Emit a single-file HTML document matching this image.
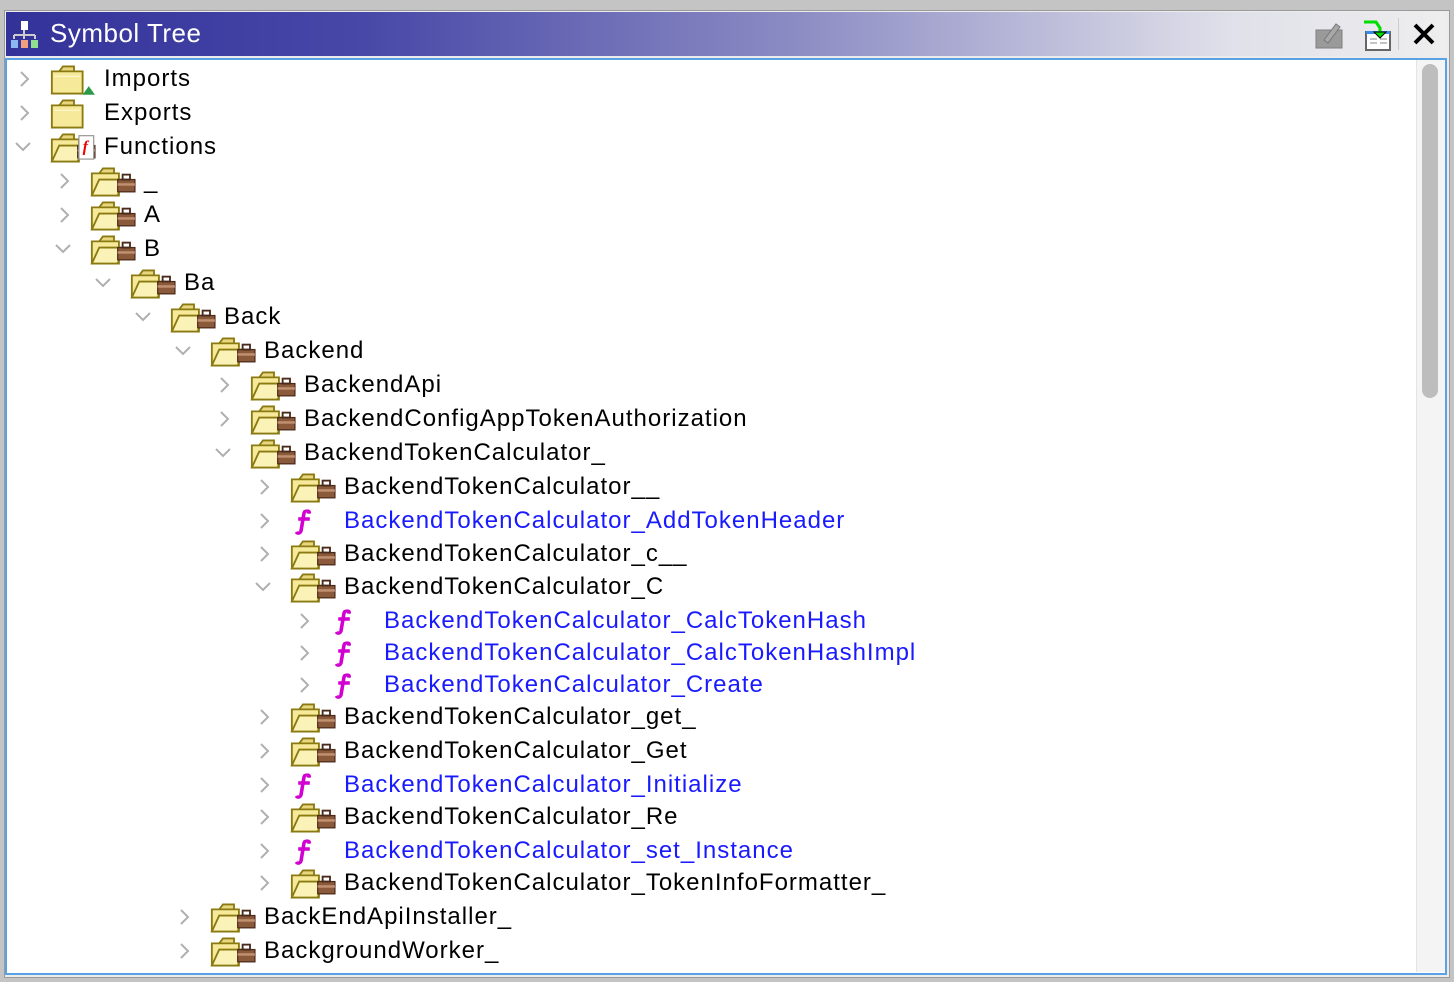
<!DOCTYPE html>
<html><head><meta charset="utf-8"><style>
body{margin:0;width:1454px;height:982px;overflow:hidden;background:#c4c4c4;font-family:"Liberation Sans",sans-serif;position:relative}
#win{position:absolute;left:4px;top:10px;width:1446px;height:968px;background:#ececec;border:1px solid #9a9a9a;box-sizing:border-box}
#title{position:absolute;left:6px;top:12px;width:1440px;height:44px;background:linear-gradient(90deg,#32329a 0%,#4848a8 25%,#8c8cc4 55%,#e0e0ea 85%,#eeeeee 100%)}
#title span{position:absolute;left:44px;top:6px;color:#fff;font-size:26px;letter-spacing:0.5px}
#content{position:absolute;left:5px;top:58px;width:1442px;height:917px;background:#fff;border:2px solid #5aa2e6;box-sizing:border-box}
.r{position:absolute;height:34px;font-size:24px;line-height:34px;white-space:nowrap}
.c{position:absolute;color:#b0b0b0}
.t{position:absolute;color:#000;letter-spacing:1px}
.b{color:#1a1aff}
#sb{position:absolute;left:1416px;top:60px;width:28px;height:912px;background:#f4f4f4;border-left:1px solid #e4e4e4}
#th{position:absolute;left:1422px;top:64px;width:16px;height:334px;background:#bdbdbd;border-radius:8px}
</style></head><body>
<div id="win"></div>
<div id="title">
<svg style="position:absolute;left:4px;top:8px" width="30" height="30" viewBox="0 0 30 30"><rect x="11" y="1" width="7" height="9" fill="#fff"/><path d="M14 10v5M4 15h21M4 15v4M14 15v4M25 15v4" stroke="#ccc" stroke-width="2" fill="none"/><rect x="1" y="20" width="7" height="8" fill="#8ab8f0"/><rect x="11" y="20" width="7" height="8" fill="#f0a080"/><rect x="21" y="20" width="7" height="8" fill="#90e090"/></svg>
<span>Symbol Tree</span>
<svg style="position:absolute;left:1308px;top:6px" width="32" height="32" viewBox="0 0 32 32"><rect x="2" y="12" width="26" height="18" fill="#9a9a9a" stroke="#808080"/><path d="M10 22l12-16 4 3-12 16z" fill="#a8a8a8" stroke="#777"/></svg>
<svg style="position:absolute;left:1356px;top:6px" width="32" height="34" viewBox="0 0 32 34"><rect x="4" y="14" width="24" height="18" fill="#fff" stroke="#666" stroke-width="2"/><rect x="4" y="13" width="24" height="3" fill="#3a8ae0"/><path d="M8 21h7M8 25h7M18 21h7M18 25h7" stroke="#888"/><path d="M2 4h12l4 6v8" stroke="#00dd00" stroke-width="3" fill="none"/><path d="M12 14l6 6 6-6z" fill="#00dd00" stroke="#000" stroke-width="1"/></svg>
<div style="position:absolute;left:1392px;top:6px;width:1px;height:32px;background:#ccc"></div>
<svg style="position:absolute;left:1406px;top:10px" width="24" height="24" viewBox="0 0 24 24"><path d="M3 3l18 18M21 3L3 21" stroke="#000" stroke-width="4"/></svg>
</div>
<div id="content"></div>
<div id="sb"><div id="th" style="left:5px;top:4px"></div></div>
<svg width="0" height="0" style="position:absolute">
<defs>
<g id="fo"><path d="M1 6h6l3-4h9v4" fill="#e8d680" stroke="#8a7a10" stroke-width="1.5"/><path d="M1 24V6h22v18z" fill="#f6ea9a" stroke="#8a7a10" stroke-width="1.5"/><path d="M1 24l6-13h20l-5 13z" fill="#fbf2b8" stroke="#8a7a10" stroke-width="1.5"/><rect x="22" y="11" width="14" height="10" fill="#8a5a3a" stroke="#4a2a1a"/><rect x="26" y="7" width="6" height="4" fill="none" stroke="#4a2a1a" stroke-width="1.5"/><rect x="22" y="14" width="14" height="2" fill="#c09070"/></g>
<g id="fc"><path d="M1 6h6l3-4h9v4" fill="#e8d680" stroke="#8a7a10" stroke-width="1.5"/><path d="M1 24V6h25v18z" fill="#f6ea9a" stroke="#8a7a10" stroke-width="1.5"/><path d="M3 10h21" stroke="#fff8d0"/></g>
<g id="ff"><path d="M10 2c4-2 7 0 6 2l-2 0c0-1-2-2-3 0l-3 18c-1 3-4 4-6 2l2-1c1 1 2 0 2-1l3-18zM5 9h10v2H5z" fill="#e000e0" stroke="#d000d0" stroke-width="1.6"/></g>
</defs></svg>
<div id="rows"></div>
<script>
var R=[[79,0,'ci','Imports'],[113,0,'c','Exports'],[147,0,'fn','Functions',1],
[181,1,'o','_'],[215,1,'o','A'],[249,1,'o','B',1],[283,2,'o','Ba',1],[317,3,'o','Back',1],[351,4,'o','Backend',1],
[385,5,'o','BackendApi'],[419,5,'o','BackendConfigAppTokenAuthorization'],[453,5,'o','BackendTokenCalculator_',1],
[487,6,'o','BackendTokenCalculator__'],[521,6,'f','BackendTokenCalculator_AddTokenHeader'],[554,6,'o','BackendTokenCalculator_c__'],[587,6,'o','BackendTokenCalculator_C',1],
[621,7,'f','BackendTokenCalculator_CalcTokenHash'],[653,7,'f','BackendTokenCalculator_CalcTokenHashImpl'],[685,7,'f','BackendTokenCalculator_Create'],
[717,6,'o','BackendTokenCalculator_get_'],[751,6,'o','BackendTokenCalculator_Get'],[785,6,'f','BackendTokenCalculator_Initialize'],[817,6,'o','BackendTokenCalculator_Re'],[851,6,'f','BackendTokenCalculator_set_Instance'],[883,6,'o','BackendTokenCalculator_TokenInfoFormatter_'],
[917,4,'o','BackEndApiInstaller_'],[951,4,'o','BackgroundWorker_']];
var h='';
R.forEach(function(r){var y=r[0]-17,L=r[1]*40,ex=r[4];
var ch=ex?'<svg class="c" style="left:'+(14+L)+'px;top:9px" width="18" height="16"><path d="M2 4l7 7 7-7" stroke="#b0b0b0" stroke-width="2" fill="none"/></svg>':'<svg class="c" style="left:'+(18+L)+'px;top:8px" width="14" height="18"><path d="M3 2l7 7-7 7" stroke="#b0b0b0" stroke-width="2" fill="none"/></svg>';
var ic='',cls='';
if(r[2]=='o')ic='<svg style="position:absolute;left:'+(50+L)+'px;top:2px" width="48" height="32" viewBox="0 0 38 26"><use href="#fo"/></svg>';
else if(r[2]=='f'){ic='<svg style="position:absolute;left:'+(294+L-240)+'px;top:5px" width="20" height="26"><use href="#ff"/></svg>';cls=' b';}
else if(r[2]=='c'||r[2]=='ci'){ic='<svg style="position:absolute;left:'+(50+L)+'px;top:2px" width="48" height="32" viewBox="0 0 38 26"><use href="#fc"/>'+(r[2]=='ci'?'<path d="M26 25l5-7 5 7z" fill="#2a9a4a"/>':'')+'</svg>';}
else ic='<svg style="position:absolute;left:'+(50+L)+'px;top:2px" width="48" height="32" viewBox="0 0 38 26"><use href="#fo"/><rect x="23" y="3" width="12" height="19" fill="#fff" stroke="#999"/><text x="26" y="16" font-size="13" font-style="italic" font-weight="bold" fill="#e00" font-family="Liberation Serif">f</text></svg>';
h+='<div class="r" style="left:0;top:'+y+'px;width:1400px">'+ch+ic+'<span class="t'+cls+'" style="left:'+(104+L)+'px">'+r[3]+'</span></div>';});
document.getElementById('rows').innerHTML=h;
</script>
</body></html>
